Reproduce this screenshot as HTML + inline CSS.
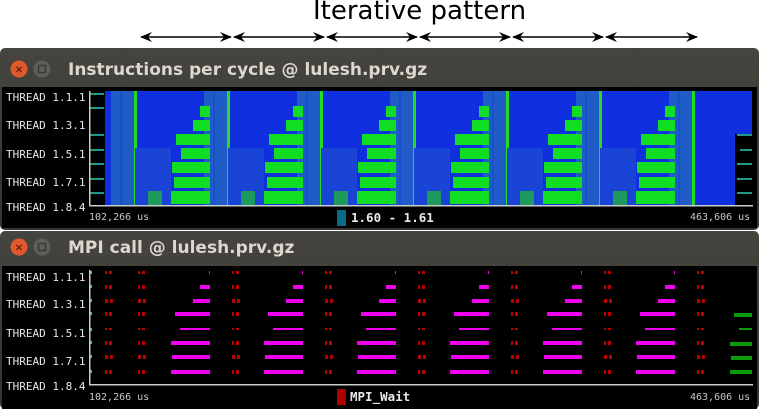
<!DOCTYPE html>
<html><head><meta charset="utf-8"><style>
body{margin:0;width:759px;height:409px;background:#fff;overflow:hidden;position:relative;font-family:"DejaVu Sans","Liberation Sans",sans-serif}
.t{position:absolute;font-size:26px;left:313px;top:-4px;color:#000;white-space:nowrap}
.m{font-family:"DejaVu Sans Mono","Liberation Mono",monospace}
</style></head><body>
<div class="t">Iterative pattern</div>
<svg width="759" height="409" style="position:absolute;left:0;top:0">
<defs>
<marker id="ah" markerWidth="12" markerHeight="10" refX="11" refY="5" orient="auto-start-reverse" markerUnits="userSpaceOnUse"><path d="M0,0 L12,5 L0,10 L4,5 Z" fill="#000"/></marker>
<linearGradient id="tb" x1="0" y1="0" x2="0" y2="1"><stop offset="0" stop-color="#45443f"/><stop offset="1" stop-color="#35342f"/></linearGradient>
<g id="bd">
<rect x="-6" y="91" width="24" height="114" fill="#1f5cc6"/>
<rect x="17" y="91" width="3" height="114" fill="#22dd22"/>
<rect x="3" y="91" width="2" height="114" fill="#1a4fd0"/>
</g>
<g id="it">
<rect x="-75" y="148" width="36" height="57" fill="#1a44d6"/>
<rect x="-62" y="191" width="14" height="14" fill="#1f9a5e"/>
<rect x="-10" y="106" width="10" height="11" fill="#11dd22"/>
<rect x="-17" y="120" width="17" height="11" fill="#11dd22"/>
<rect x="-34" y="134" width="34" height="11" fill="#11dd22"/>
<rect x="-29" y="148" width="29" height="11" fill="#11dd22"/>
<rect x="-38" y="162" width="38" height="11" fill="#11dd22"/>
<rect x="-36" y="177" width="36" height="11" fill="#11dd22"/>
<rect x="-39" y="191" width="39" height="13" fill="#11dd22"/>
</g>
<g id="mp">
<rect x="-1" y="271" width="1" height="3" fill="#ee00ee"/>
<rect x="-10" y="285" width="10" height="4" fill="#ee00ee"/>
<rect x="-17" y="299" width="17" height="4" fill="#ee00ee"/>
<rect x="-35" y="312" width="35" height="4" fill="#ee00ee"/>
<rect x="-30" y="328" width="30" height="2" fill="#ee00ee"/>
<rect x="-39" y="341" width="39" height="4" fill="#ee00ee"/>
<rect x="-38" y="355" width="38" height="4" fill="#ee00ee"/>
<rect x="-39" y="370" width="39" height="4" fill="#ee00ee"/>
</g>
<g id="rd" fill="#bb0000">
<rect x="0" y="271" width="2" height="3"/><rect x="4" y="271" width="3" height="3"/>
<rect x="0" y="285" width="2" height="4"/><rect x="4" y="285" width="3" height="4"/>
<rect x="0" y="299" width="3" height="4"/><rect x="5" y="299" width="3" height="4"/>
<rect x="0" y="312" width="2" height="4"/><rect x="4" y="312" width="3" height="4"/>
<rect x="0" y="328" width="2" height="2"/><rect x="4" y="328" width="3" height="2"/>
<rect x="0" y="341" width="2" height="4"/><rect x="4" y="341" width="3" height="4"/>
<rect x="0" y="355" width="3" height="4"/><rect x="5" y="355" width="3" height="4"/>
<rect x="0" y="370" width="2" height="4"/><rect x="4" y="370" width="3" height="4"/>
</g>
</defs>
<g stroke="#000" stroke-width="1.6" marker-start="url(#ah)" marker-end="url(#ah)">
<line x1="141" y1="37" x2="231" y2="37"/><line x1="234" y1="37" x2="324" y2="37"/>
<line x1="327" y1="37" x2="417" y2="37"/><line x1="420" y1="37" x2="510" y2="37"/>
<line x1="513" y1="37" x2="603" y2="37"/><line x1="606" y1="37" x2="697" y2="37"/>
</g>
<!-- top window -->
<rect x="0" y="48" width="759" height="182" rx="5" fill="url(#tb)"/>
<rect x="2" y="87" width="755" height="141" fill="#000"/>
<circle cx="19" cy="69" r="8.5" fill="#e0582c"/><text x="19" y="72.5" font-size="10" fill="#5a1a0a" text-anchor="middle" font-weight="bold">×</text>
<circle cx="42" cy="69" r="8.5" fill="#5e5d58"/><rect x="38.5" y="65.5" width="7" height="7" fill="none" stroke="#3a3935" stroke-width="1.5"/>
<text x="68" y="75" font-size="17" font-weight="bold" fill="#dcd8cf">Instructions per cycle @ lulesh.prv.gz</text>
<rect x="105" y="91" width="647" height="114" fill="#1030e0"/>
<rect x="735" y="134" width="17" height="71" fill="#000"/>
<g fill="#1f9a8a"><rect x="90" y="93" width="14" height="2"/><rect x="90" y="107" width="14" height="2"/><rect x="90" y="134" width="14" height="2"/><rect x="90" y="149" width="14" height="2"/><rect x="90" y="163" width="14" height="2"/><rect x="90" y="178" width="14" height="2"/><rect x="90" y="192" width="14" height="2"/>
<rect x="737" y="134" width="15" height="2"/><rect x="740" y="149" width="12" height="2"/><rect x="737" y="163" width="15" height="2"/><rect x="737" y="178" width="15" height="2"/><rect x="737" y="192" width="15" height="2"/></g>
<use href="#bd" x="117"/><use href="#bd" x="210"/><use href="#bd" x="303"/><use href="#bd" x="396"/><use href="#bd" x="489"/><use href="#bd" x="582"/><use href="#bd" x="675"/>
<use href="#it" x="210"/><use href="#it" x="303"/><use href="#it" x="396"/><use href="#it" x="489"/><use href="#it" x="582"/><use href="#it" x="675"/>
<rect x="89" y="205" width="664" height="1.5" fill="#ccc"/><rect x="89" y="91" width="1.5" height="115" fill="#ccc"/>
<g class="m" font-size="11" fill="#e8e8e8">
<text x="6" y="101">THREAD 1.1.1</text><text x="6" y="129">THREAD 1.3.1</text><text x="6" y="158">THREAD 1.5.1</text><text x="6" y="186">THREAD 1.7.1</text><text x="6" y="211">THREAD 1.8.4</text>
</g>
<g class="m" font-size="10" fill="#c8c8c8"><text x="89" y="220">102,266 us</text><text x="690" y="220">463,606 us</text></g>
<rect x="337" y="210" width="9" height="16" fill="#0a6a8a"/>
<text x="351" y="222" class="m" font-size="12.5" font-weight="bold" fill="#e8e8e8">1.60 - 1.61</text>
<!-- bottom window -->
<rect x="0" y="231" width="759" height="178" rx="5" fill="url(#tb)"/>
<rect x="2" y="266" width="755" height="143" fill="#000"/>
<circle cx="19" cy="247" r="8.5" fill="#e0582c"/><text x="19" y="250.5" font-size="10" fill="#5a1a0a" text-anchor="middle" font-weight="bold">×</text>
<circle cx="42" cy="247" r="8.5" fill="#5e5d58"/><rect x="38.5" y="243.5" width="7" height="7" fill="none" stroke="#3a3935" stroke-width="1.5"/>
<text x="68" y="253" font-size="17" font-weight="bold" fill="#dcd8cf">MPI call @ lulesh.prv.gz</text>
<use href="#mp" x="210"/><use href="#mp" x="303"/><use href="#mp" x="396"/><use href="#mp" x="489"/><use href="#mp" x="582"/><use href="#mp" x="675"/>
<use href="#rd" x="105"/><use href="#rd" x="138"/><use href="#rd" x="232"/><use href="#rd" x="325"/><use href="#rd" x="418"/><use href="#rd" x="511"/><use href="#rd" x="604"/><use href="#rd" x="697"/>
<g fill="#0a9a0a"><rect x="734" y="313" width="18" height="4"/><rect x="739" y="328" width="13" height="2"/><rect x="730" y="342" width="22" height="4"/><rect x="731" y="356" width="21" height="4"/><rect x="730" y="370" width="22" height="4"/></g>
<g fill="#33cc66"><rect x="90" y="271" width="2" height="3"/><rect x="90" y="285" width="2" height="3"/><rect x="90" y="299" width="2" height="3"/><rect x="90" y="312" width="2" height="3"/><rect x="90" y="328" width="2" height="3"/><rect x="90" y="341" width="2" height="3"/><rect x="90" y="355" width="2" height="3"/><rect x="90" y="370" width="2" height="3"/></g>
<rect x="89" y="384" width="664" height="1.5" fill="#ccc"/><rect x="89" y="270" width="1.5" height="115" fill="#ccc"/>
<g class="m" font-size="11" fill="#e8e8e8">
<text x="6" y="281">THREAD 1.1.1</text><text x="6" y="308">THREAD 1.3.1</text><text x="6" y="337">THREAD 1.5.1</text><text x="6" y="365">THREAD 1.7.1</text><text x="6" y="390">THREAD 1.8.4</text>
</g>
<g class="m" font-size="10" fill="#c8c8c8"><text x="89" y="400">102,266 us</text><text x="690" y="400">463,606 us</text></g>
<rect x="337" y="389" width="9" height="16" fill="#aa0000"/>
<text x="350" y="401" class="m" font-size="12.5" font-weight="bold" fill="#e8e8e8">MPI_Wait</text>
</svg>
</body></html>
